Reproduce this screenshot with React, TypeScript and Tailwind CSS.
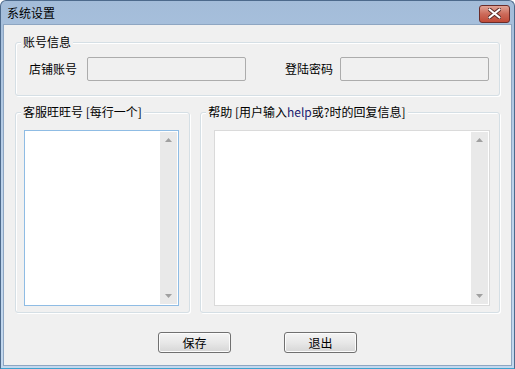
const font = { fontFamily: '"Noto Sans CJK SC", "Noto Sans", sans-serif' };

const Scrollbar = () => (
  <div className="flex h-full w-[17px] flex-col items-center justify-between bg-[#e9e9e9] py-[6px]">
    <svg width="7" height="4" viewBox="0 0 7 4">
      <path d="M0 4 L3.5 0 L7 4 Z" fill="#a0a0a0" />
    </svg>
    <svg width="7" height="4" viewBox="0 0 7 4">
      <path d="M0 0 L3.5 4 L7 0 Z" fill="#a0a0a0" />
    </svg>
  </div>
);

const GroupBox = ({ title, className, children }: { title: React.ReactNode; className: string; children: React.ReactNode }) => (
  <div className={`relative rounded-[3px] border border-[#d5dfe5] shadow-[inset_1px_1px_0_#fff,1px_1px_0_#fff] ${className}`}>
    <span className="absolute -top-[10px] left-[5px] bg-[#f0f0f0] px-[2px] text-[12px] leading-[18px] text-black">{title}</span>
    {children}
  </div>
);

const Field = ({ label, labelClass, inputClass }: { label: string; labelClass: string; inputClass: string }) => (
  <div className="flex items-center">
    <span className={`text-[12px] text-black ${labelClass}`}>{label}</span>
    <div className={`h-[24px] rounded-[2px] border border-[#acacac] bg-[#f0f0f0] ${inputClass}`} />
  </div>
);

export default function App() {
  return (
    <div
      className="flex h-[369px] w-[515px] flex-col rounded-t-[6px] border border-[#4d6a8c] border-b-[#3fa3cf] bg-gradient-to-b from-[#a3bcd9] via-[#bcd2ea] to-[#c3d8ee]"
      style={font}
    >
      {/* title bar */}
      <div className="flex h-[23px] shrink-0 items-center justify-between pl-[6px] pr-[4px]">
        <span className="text-[12px] text-black">系统设置</span>
        <div className="mt-[2px] flex h-[18px] w-[31px] items-center justify-center rounded-[3px] border border-[#6b2c29] bg-gradient-to-b from-[#e0a497] via-[#cc6a59] to-[#c04a37]">
          <svg width="13" height="11" viewBox="0 0 13 11">
            <path d="M1.5 1.5 L11.5 9.5 M11.5 1.5 L1.5 9.5" stroke="#5a2a26" strokeWidth="4" strokeLinecap="round" />
            <path d="M1.5 1.5 L11.5 9.5 M11.5 1.5 L1.5 9.5" stroke="#ffffff" strokeWidth="2.2" strokeLinecap="round" />
          </svg>
        </div>
      </div>

      {/* client area */}
      <div className="mx-[2px] mb-[2px] flex flex-1 flex-col border border-[#8ea6c2] bg-[#f0f0f0] px-[11px] pt-[17px]">
        <GroupBox title="账号信息" className="flex h-[54px] items-center justify-between pl-[13px] pr-[10px]">
          <Field label="店铺账号" labelClass="w-[58px]" inputClass="w-[159px]" />
          <Field label="登陆密码" labelClass="w-[55px]" inputClass="w-[149px]" />
        </GroupBox>

        <div className="mt-[16px] flex gap-[10px]">
          <GroupBox title="客服旺旺号 [每行一个]" className="h-[201px] w-[176px] pl-[8px] pt-[17px]">
            <div className="flex h-[176px] w-[155px] justify-end border border-[#8fbce4] bg-white p-[1px]">
              <Scrollbar />
            </div>
          </GroupBox>
          <GroupBox
            title={
              <>
                帮助 [用户输入<span className="text-[#1a1a6e]">help</span>或?时的回复信息]
              </>
            }
            className="h-[201px] w-[301px] pl-[13px] pt-[17px]"
          >
            <div className="flex h-[176px] w-[276px] justify-end border border-[#dadada] bg-white p-[1px]">
              <Scrollbar />
            </div>
          </GroupBox>
        </div>

        <div className="mt-[19px] flex justify-center gap-[53px]">
          {['保存', '退出'].map((t) => (
            <button
              key={t}
              className="h-[21px] w-[73px] rounded-[3px] border border-[#707070] bg-gradient-to-b from-[#f4f4f4] via-[#e8e8e8] to-[#d6d6d6] text-[12px] leading-[19px] text-black shadow-[inset_0_0_0_1px_#fcfcfc]"
            >
              {t}
            </button>
          ))}
        </div>
      </div>
    </div>
  );
}
